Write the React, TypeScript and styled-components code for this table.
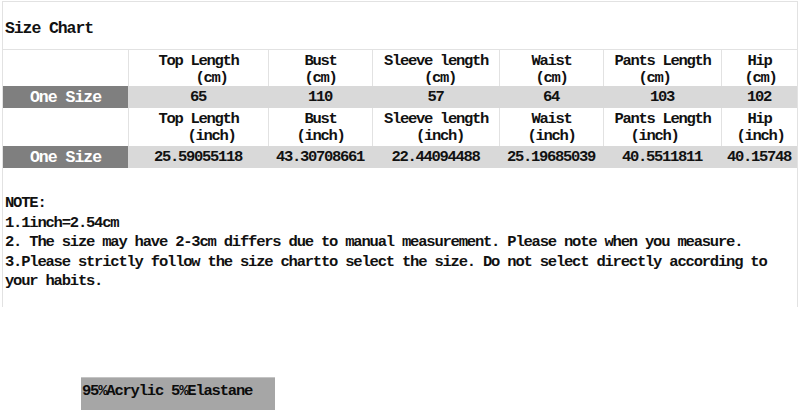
import React from "react";
import styled, { createGlobalStyle } from "styled-components";

const Global = createGlobalStyle`
  html, body {
    margin: 0;
    padding: 0;
    width: 800px;
    height: 410px;
    overflow: hidden;
    background: #ffffff;
  }
  body {
    font-family: "Liberation Mono", "DejaVu Sans Mono", monospace;
    color: #111111;
  }
`;

const Page = styled.div`
  width: 800px;
  height: 410px;
  display: flex;
  flex-direction: column;
`;

const Sheet = styled.div`
  margin: 1px 2px 0 2px;
  height: 306px;
  border: 1px solid #e2e2e2;
  border-bottom: none;
  box-sizing: border-box;
  display: flex;
  flex-direction: column;
`;

const Title = styled.div`
  height: 48px;
  box-sizing: border-box;
  padding: 17px 0 0 2px;
  line-height: 20px;
  font-size: 16.5px;
  font-weight: bold;
  letter-spacing: -1.1px;
  border-bottom: 1px solid #e2e2e2;
`;

const Row = styled.div<{ $h: number; $fill?: boolean }>`
  display: grid;
  grid-template-columns: 125px 140px 104px 127px 104px 118px 76px;
  height: ${(p) => p.$h}px;
  background: ${(p) => (p.$fill ? "#d9d9d9" : "#ffffff")};
`;

const HeadCell = styled.div<{ $first?: boolean }>`
  display: flex;
  flex-direction: column;
  align-items: center;
  justify-content: flex-start;
  padding-top: 3px;
  box-sizing: border-box;
  border-left: ${(p) => (p.$first ? "none" : "1px solid #e2e2e2")};
  font-size: 15.5px;
  font-weight: bold;
  letter-spacing: -1.3px;
  line-height: 17px;
  white-space: nowrap;
`;

const Unit = styled.span<{ $shift: number }>`
  padding-left: ${(p) => (p.$shift > 0 ? p.$shift * 2 : 0)}px;
  padding-right: ${(p) => (p.$shift < 0 ? -p.$shift * 2 : 0)}px;
`;

const Label = styled.div`
  display: flex;
  align-items: center;
  justify-content: center;
  background: #7f7f7f;
  color: #ffffff;
  font-size: 16.5px;
  font-weight: bold;
  letter-spacing: -1px;
`;

const Value = styled.div`
  display: flex;
  align-items: center;
  justify-content: center;
  font-size: 15.5px;
  font-weight: bold;
  letter-spacing: -1.3px;
  white-space: nowrap;
`;

const Notes = styled.div`
  margin-top: 26px;
  padding: 0 4px 0 2px;
  font-size: 15.5px;
  font-weight: bold;
  letter-spacing: -1.2px;
  line-height: 19.5px;
`;

const NoteLine = styled.div``;

const Material = styled.div`
  margin: 70px 0 0 81px;
  width: 194px;
  height: 33px;
  box-sizing: border-box;
  background: #a6a6a6;
  border-top: 1px solid #c4c4c4;
  padding: 3px 0 0 1px;
  line-height: 20px;
  font-size: 15.5px;
  font-weight: bold;
  letter-spacing: -1.2px;
  color: #0c0c0c;
`;

const columns = [
  { name: "Top Length", shift: 13, cm: "65", inch: "25.59055118" },
  { name: "Bust", shift: 0, cm: "110", inch: "43.30708661" },
  { name: "Sleeve length", shift: 4, cm: "57", inch: "22.44094488" },
  { name: "Waist", shift: 0, cm: "64", inch: "25.19685039" },
  { name: "Pants Length", shift: -8, cm: "103", inch: "40.5511811" },
  { name: "Hip", shift: 1, cm: "102", inch: "40.15748" },
];

const Header: React.FC<{ unit: string; h: number }> = ({ unit, h }) => (
  <Row $h={h}>
    <HeadCell $first />
    {columns.map((c) => (
      <HeadCell key={c.name}>
        <span>{c.name}</span>
        <Unit $shift={c.shift}>({unit})</Unit>
      </HeadCell>
    ))}
  </Row>
);

const Data: React.FC<{ unit: "cm" | "inch" }> = ({ unit }) => (
  <Row $h={22} $fill>
    <Label>One Size</Label>
    {columns.map((c) => (
      <Value key={c.name}>{c[unit]}</Value>
    ))}
  </Row>
);

export default function App() {
  return (
    <Page>
      <Global />
      <Sheet>
        <Title>Size Chart</Title>
        <Header unit="cm" h={36} />
        <Data unit="cm" />
        <Header unit="inch" h={38} />
        <Data unit="inch" />
        <Notes>
          <NoteLine>NOTE:</NoteLine>
          <NoteLine>1.1inch=2.54cm</NoteLine>
          <NoteLine>
            2. The size may have 2-3cm differs due to manual measurement. Please note when you measure.
          </NoteLine>
          <NoteLine>
            3.Please strictly follow the size chartto select the size. Do not select directly according to your habits.
          </NoteLine>
        </Notes>
      </Sheet>
      <Material>95%Acrylic 5%Elastane</Material>
    </Page>
  );
}
